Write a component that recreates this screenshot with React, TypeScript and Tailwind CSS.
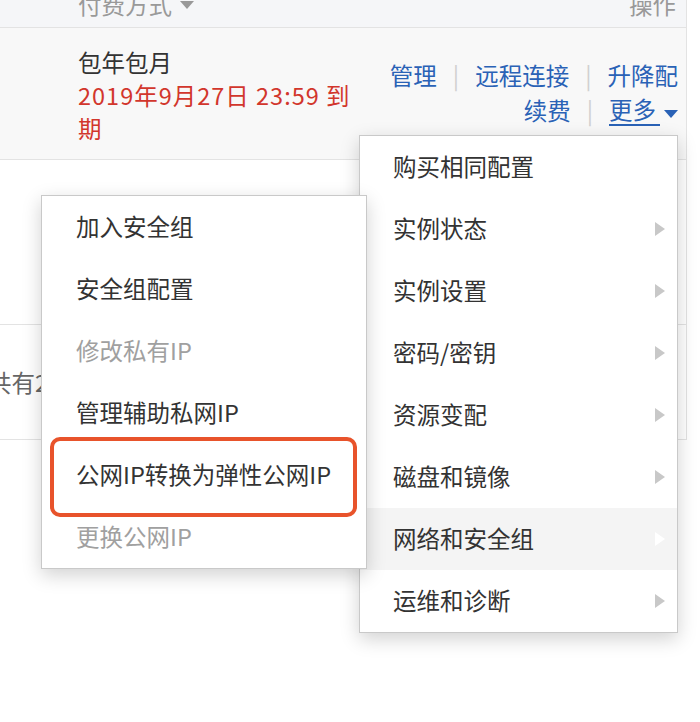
import React from "react";

const FONT = { fontFamily: '"Noto Sans CJK SC", "Noto Sans", sans-serif' };

type Item = { label: string; disabled?: boolean; sub?: boolean; hover?: boolean };

const MAIN_MENU: Item[] = [
  { label: "购买相同配置" },
  { label: "实例状态", sub: true },
  { label: "实例设置", sub: true },
  { label: "密码/密钥", sub: true },
  { label: "资源变配", sub: true },
  { label: "磁盘和镜像", sub: true },
  { label: "网络和安全组", sub: true, hover: true },
  { label: "运维和诊断", sub: true },
];

const NET_MENU: Item[] = [
  { label: "加入安全组" },
  { label: "安全组配置" },
  { label: "修改私有IP", disabled: true },
  { label: "管理辅助私网IP" },
  { label: "公网IP转换为弹性公网IP" },
  { label: "更换公网IP", disabled: true },
];

function Caret() {
  return <span className="inline-block h-0 w-0 border-x-[7px] border-t-[8px] border-x-transparent border-t-current align-middle" />;
}

function Sep() {
  return <span className="mx-[16px] text-[#d0d0d0]">|</span>;
}

export default function App() {
  return (
    <div className="relative h-[722px] w-[700px] overflow-hidden bg-white text-[23.5px] text-[#333]" style={FONT}>
      {/* table */}
      <div className="w-[687px] border-r border-b border-[#e3e3e3]">
        <div className="flex h-[28px] items-start justify-between overflow-hidden border-b border-[#e3e3e3] bg-[#f5f6f8] pl-[78px] pr-[10px] text-[#999]">
          <span className="mt-[-13px] flex items-center gap-[8px]">
            付费方式 <Caret />
          </span>
          <span className="mt-[-13px]">操作</span>
        </div>

        <div className="flex h-[132px] justify-between border-b border-[#e3e3e3] bg-[#f8f8f8] pl-[78px] pr-[8px] pt-[17px]">
          <div className="w-[290px] pt-[1px] leading-[33px]">
            <div>包年包月</div>
            <div className="tracking-[1px] text-[#d2362c]">2019年9月27日 23:59 到期</div>
          </div>
          <div className="flex flex-col items-end pt-[13px] leading-[35px] text-[#2a62b6]">
            <div>
              管理<Sep />远程连接<Sep />升降配
            </div>
            <div className="flex items-center">
              续费<Sep />
              <span className="border-b-2 border-[#2a62b6] pr-[4px] leading-[29px]">更多</span>
              <span className="ml-[4px] text-[#2a62b6]">
                <Caret />
              </span>
            </div>
          </div>
        </div>

        <div className="h-[165px] border-b border-[#e3e3e3]" />

        <div className="flex h-[114px] items-center">
          <span className="ml-[-12px] mt-[2px] text-[#666]">共有2条</span>
        </div>
      </div>

      {/* main "more" menu */}
      <div className="absolute left-[359px] top-[135px] w-[319px] border border-[#c9c9c9] bg-white shadow-[0_6px_18px_rgba(0,0,0,0.18)]">
        {MAIN_MENU.map((it) => (
          <div
            key={it.label}
            className={`flex h-[62px] items-center justify-between pl-[33px] pr-[12px] ${it.hover ? "bg-[#f4f4f4]" : ""}`}
          >
            <span>{it.label}</span>
            {it.sub && (
              <span
                className={`h-0 w-0 border-y-[7px] border-l-[10px] border-y-transparent ${
                  it.hover ? "border-l-white" : "border-l-[#c8c8c8]"
                }`}
              />
            )}
          </div>
        ))}
      </div>

      {/* network submenu */}
      <div className="absolute left-[41px] top-[195px] w-[326px] border border-[#c9c9c9] bg-white shadow-[0_6px_18px_rgba(0,0,0,0.18)]">
        {NET_MENU.map((it) => (
          <div key={it.label} className={`flex h-[62px] items-center pl-[34px] ${it.disabled ? "text-[#a0a0a0]" : ""}`}>
            {it.label}
          </div>
        ))}
      </div>

      {/* annotation */}
      <div className="absolute left-[50px] top-[437px] h-[80px] w-[307px] rounded-[10px] border-[4px] border-[#e8532b]" />
    </div>
  );
}
